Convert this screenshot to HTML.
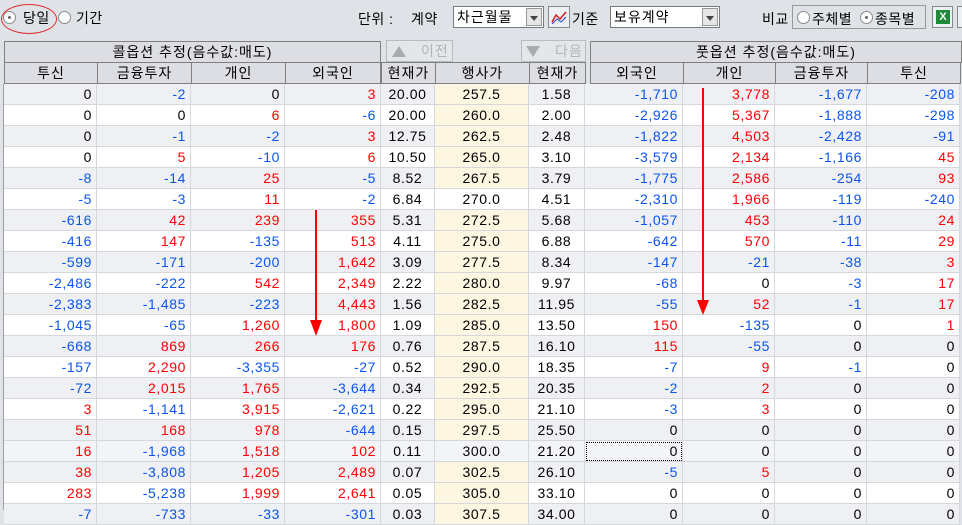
<!DOCTYPE html>
<html><head><meta charset="utf-8">
<style>
*{box-sizing:border-box;margin:0;padding:0}
body{width:962px;height:510px;overflow:hidden;background:#dfe2e7;font-family:"Liberation Sans","Noto Sans CJK KR","NanumGothic",sans-serif;font-size:13px;color:#000;position:relative}
.a{position:absolute}
.hd{position:absolute;background:#dcdee3;border:1px solid #808080;text-align:center;line-height:20px;font-size:14px;letter-spacing:1px;white-space:nowrap}
.cell{position:absolute;height:21px;line-height:21px;border-right:1px solid #d6d7dc;border-bottom:1px solid #d6d7dc;text-align:right;padding-right:4px;font-size:14px;letter-spacing:0.6px}
.c{text-align:center;padding:0}
.r{color:#f00}.b{color:#0a55f0}
.radio{position:absolute;width:13px;height:13px;border-radius:50%;border:1px solid #8a8a8a;background:#fff}
.radio.on::after{content:"";position:absolute;left:4px;top:4px;width:3px;height:3px;border-radius:50%;background:#666}
.combo{position:absolute;height:22px;border:1px solid #7a7a7a;background:#fff;line-height:20px;padding-left:3px;font-size:14px;letter-spacing:1px;white-space:nowrap}
.dd{position:absolute;right:1px;top:1px;width:16px;height:18px;background:#e6e6e6;border:1px solid #999}
.dd::after{content:"";position:absolute;left:3px;top:7px;border-left:4px solid transparent;border-right:4px solid transparent;border-top:5px solid #444}
.btn{position:absolute;border:1px solid #b8bcc2;background:#e4e6ea;color:#b0b3b8;font-size:14px;line-height:20px;letter-spacing:1px;white-space:nowrap}
.t{position:absolute;font-size:14px;letter-spacing:0.5px;white-space:nowrap}
</style></head><body>
<div class="a" style="left:1px;top:4px;width:56px;height:30px;border:1px solid #e03030;border-radius:50%"></div>
<div class="radio on" style="left:3px;top:11px"></div>
<div class="t" style="left:23px;top:8px">당일</div>
<div class="radio" style="left:58px;top:11px"></div>
<div class="t" style="left:76px;top:8px">기간</div>
<div class="t" style="left:358px;top:9px">단위 :</div>
<div class="t" style="left:411px;top:9px">계약</div>
<div class="combo" style="left:453px;top:6px;width:91px">차근월물<div class="dd"></div></div>
<div class="a" style="left:548px;top:6px;width:22px;height:22px;border:1px solid #888;background:#eef0f3">
<svg width="20" height="20"><path d="M3 15 L7 8 L11 12 L17 5" stroke="#d02020" fill="none" stroke-width="1.5"/><path d="M3 17 L8 12 L12 15 L17 10" stroke="#2040c0" fill="none" stroke-width="1"/></svg></div>
<div class="t" style="left:572px;top:9px">기준</div>
<div class="combo" style="left:610px;top:6px;width:110px">보유계약<div class="dd"></div></div>
<div class="t" style="left:762px;top:9px">비교</div>
<div class="a" style="left:792px;top:5px;width:134px;height:24px;border:1px solid #999"></div>
<div class="radio" style="left:797px;top:11px"></div>
<div class="t" style="left:812px;top:9px">주체별</div>
<div class="radio on" style="left:860px;top:11px"></div>
<div class="t" style="left:875px;top:9px">종목별</div>
<div class="a" style="left:932px;top:6px;width:21px;height:22px;border:1px solid #888;background:#eef0f3"><div style="position:absolute;left:3px;top:3px;width:14px;height:14px;background:#1f8a3a;color:#fff;font-size:11px;line-height:14px;text-align:center;font-weight:bold">X</div></div>
<div class="a" style="left:957px;top:6px;width:6px;height:22px;border:1px solid #888;background:#eef0f3"></div>
<div class="hd" style="left:4px;top:41px;width:377px;height:22px">콜옵션 추정(음수값:매도)</div>
<div class="hd" style="left:590px;top:41px;width:372px;height:22px">풋옵션 추정(음수값:매도)</div>
<div class="btn" style="left:386px;top:40px;width:67px;height:22px"><span style="position:absolute;left:5px;top:5px;border-left:7px solid transparent;border-right:7px solid transparent;border-bottom:11px solid #a8abb0"></span><span style="position:absolute;left:34px">이전</span></div>
<div class="btn" style="left:521px;top:40px;width:65px;height:22px"><span style="position:absolute;left:4px;top:5px;border-left:7px solid transparent;border-right:7px solid transparent;border-top:11px solid #a8abb0"></span><span style="position:absolute;left:33px">다음</span></div>
<div id="ch"></div>
<div id="g"></div>
<div class="a" style="left:315px;top:210px;width:2px;height:112px;background:#f00"></div>
<div class="a" style="left:310px;top:320px;border-left:6px solid transparent;border-right:6px solid transparent;border-top:16px solid #f00"></div>
<div class="a" style="left:702px;top:88px;width:2px;height:214px;background:#f00"></div>
<div class="a" style="left:697px;top:300px;border-left:6px solid transparent;border-right:6px solid transparent;border-top:15px solid #f00"></div>
<script>
var X=[4,97,191,285,381,435,529,585,683,775,867,960];
var H=["투신","금융투자","개인","외국인","현재가","행사가","현재가","외국인","개인","금융투자","투신"];
var s="";
for(var i=0;i<11;i++){var l=X[i],w=X[i+1]-X[i]+1;if(i==3)w-=1;if(i==7){l=590;w=X[8]-590+1}s+='<div class="hd" style="left:'+l+'px;top:62px;width:'+w+'px;height:22px">'+H[i]+'</div>'}
document.getElementById("ch").innerHTML=s;
var D=[
[0,-2,0,3,"20.00","257.5","1.58",-1710,3778,-1677,-208],
[0,0,6,-6,"20.00","260.0","2.00",-2926,5367,-1888,-298],
[0,-1,-2,3,"12.75","262.5","2.48",-1822,4503,-2428,-91],
[0,5,-10,6,"10.50","265.0","3.10",-3579,2134,-1166,45],
[-8,-14,25,-5,"8.52","267.5","3.79",-1775,2586,-254,93],
[-5,-3,11,-2,"6.84","270.0","4.51",-2310,1966,-119,-240],
[-616,42,239,355,"5.31","272.5","5.68",-1057,453,-110,24],
[-416,147,-135,513,"4.11","275.0","6.88",-642,570,-11,29],
[-599,-171,-200,1642,"3.09","277.5","8.34",-147,-21,-38,3],
[-2486,-222,542,2349,"2.22","280.0","9.97",-68,0,-3,17],
[-2383,-1485,-223,4443,"1.56","282.5","11.95",-55,52,-1,17],
[-1045,-65,1260,1800,"1.09","285.0","13.50",150,-135,0,1],
[-668,869,266,176,"0.76","287.5","16.10",115,-55,0,0],
[-157,2290,-3355,-27,"0.52","290.0","18.35",-7,9,-1,0],
[-72,2015,1765,-3644,"0.34","292.5","20.35",-2,2,0,0],
[3,-1141,3915,-2621,"0.22","295.0","21.10",-3,3,0,0],
[51,168,978,-644,"0.15","297.5","25.50",0,0,0,0],
[16,-1968,1518,102,"0.11","300.0","21.20",0,0,0,0],
[38,-3808,1205,2489,"0.07","302.5","26.10",-5,5,0,0],
[283,-5238,1999,2641,"0.05","305.0","33.10",0,0,0,0],
[-7,-733,-33,-301,"0.03","307.5","34.00",0,0,0,0]];
function f(n){var t=Math.abs(n).toString().replace(/\B(?=(\d{3})+(?!\d))/g,",");return (n<0?"-":"")+t}
s="";
for(var r=0;r<D.length;r++){var y=84+r*21;var bg=r%2==0?"#eff0f4":"#fff";if(r==17)bg="#f3f4f7";
for(var i=0;i<11;i++){var v=D[r][i],cls="cell",txt,b=bg;
if(i>=4&&i<=6){cls+=" c";txt=v;if(i==5&&r!=5&&r!=17)b="#fdf6e0"}else{txt=f(v);if(v>0)cls+=" r";else if(v<0)cls+=" b"}
var l=X[i],w=X[i+1]-X[i];
var ex=(r==17&&i==7)?"outline:1px dotted #000;outline-offset:-2px;":"";
s+='<div class="'+cls+'" style="left:'+l+'px;top:'+y+'px;width:'+w+'px;background:'+b+';'+ex+'">'+txt+'</div>'}}
document.getElementById("g").innerHTML=s;
</script>
<div class="a" style="left:3px;top:84px;width:1px;height:426px;background:#a0a0a0"></div>
</body></html>
